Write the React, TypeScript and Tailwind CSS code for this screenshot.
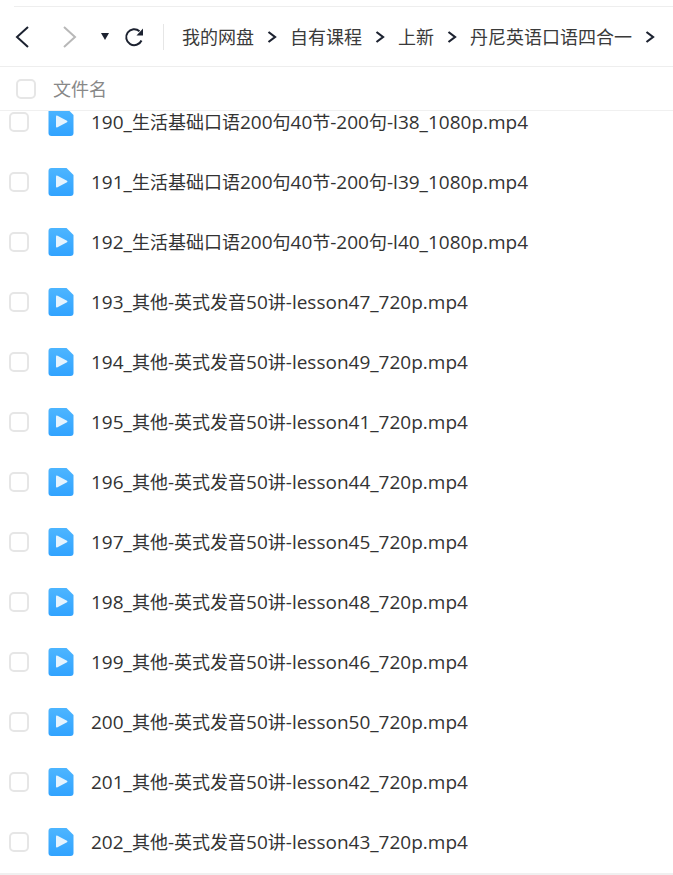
const files = [
  "190_生活基础口语200句40节-200句-l38_1080p.mp4",
  "191_生活基础口语200句40节-200句-l39_1080p.mp4",
  "192_生活基础口语200句40节-200句-l40_1080p.mp4",
  "193_其他-英式发音50讲-lesson47_720p.mp4",
  "194_其他-英式发音50讲-lesson49_720p.mp4",
  "195_其他-英式发音50讲-lesson41_720p.mp4",
  "196_其他-英式发音50讲-lesson44_720p.mp4",
  "197_其他-英式发音50讲-lesson45_720p.mp4",
  "198_其他-英式发音50讲-lesson48_720p.mp4",
  "199_其他-英式发音50讲-lesson46_720p.mp4",
  "200_其他-英式发音50讲-lesson50_720p.mp4",
  "201_其他-英式发音50讲-lesson42_720p.mp4",
  "202_其他-英式发音50讲-lesson43_720p.mp4",
]

const crumbs = ["我的网盘", "自有课程", "上新", "丹尼英语口语四合一"]

function Check() {
  return <div className="w-[20px] h-[20px] shrink-0 rounded-[5px] border-2 border-[#e6e6e6] bg-white" />
}

function VideoIcon() {
  return (
    <svg width="26" height="28" viewBox="0 0 26 28" className="shrink-0">
      <defs>
        <linearGradient id="vid" x1="0" y1="0" x2="0" y2="1">
          <stop offset="0" stopColor="#4db5ff" />
          <stop offset="1" stopColor="#31a3ff" />
        </linearGradient>
      </defs>
      <path d="M3 0H18L25 7V25Q25 28 22 28H3Q0 28 0 25V3Q0 0 3 0Z" fill="url(#vid)" transform="translate(0.5 0)" />
      <path d="M8 8.5Q8 7 9.5 7.7L19 12.7Q20 13.5 19 14.3L9.5 19.3Q8 20 8 18.5Z" fill="#e6f4ff" />
    </svg>
  )
}

function Arrow({ dir, color }: { dir: "left" | "right"; color: string }) {
  return (
    <svg width="14" height="24" viewBox="0 0 14 24" fill="none" stroke={color} strokeWidth="2">
      <path d={dir === "left" ? "M13 2L2 12L13 22" : "M1 2L12 12L1 22"} />
    </svg>
  )
}

function Sep() {
  return (
    <svg width="10" height="12" viewBox="0 0 10 12" fill="none" stroke="#1c2230" strokeWidth="2.2" className="mx-[13px]">
      <path d="M1.5 1L8 6L1.5 11" />
    </svg>
  )
}

// latin runs are set a bit larger than the CJK ones, the original font has wide digits
function FileName({ name }: { name: string }) {
  return (
    <span className="ml-[17px] whitespace-nowrap">
      {name.split(/([\u4e00-\u9fa5]+)/).map((part, i) =>
        i % 2 === 1 ? (
          <span key={i} className="text-[18px]">{part}</span>
        ) : (
          <span key={i} className="text-[19px] font-['Open_Sans','Noto_Sans_CJK_SC',sans-serif]">{part}</span>
        )
      )}
    </span>
  )
}

export default function App() {
  return (
    <div className="w-[673px] h-[875px] bg-white overflow-hidden flex flex-col font-['Noto_Sans_CJK_SC',sans-serif] text-[#333]">
      <div className="h-[6px] shrink-0" />
      <div className="ml-[14px] h-px shrink-0 bg-[#eeeeee]" />
      <div className="h-[60px] shrink-0 border-b border-[#eeeeee] flex items-center pl-[15px]">
        <Arrow dir="left" color="#1c2230" />
        <div className="ml-[34px]">
          <Arrow dir="right" color="#b8b8b8" />
        </div>
        <div className="ml-[24px] w-0 h-0 border-x-[4.5px] border-x-transparent border-t-[7px] border-t-[#1c2230]" />
        <svg width="20" height="20" viewBox="0 0 20 20" fill="none" className="ml-[15px]">
          <path d="M17.5 13.5A8 8 0 1 1 15.5 4.2" stroke="#1c2230" strokeWidth="2" />
          <path d="M19 1.5V8.5H12.5Z" fill="#1c2230" />
        </svg>
        <div className="ml-[19px] w-px h-[26px] bg-[#e6e6e6]" />
        <div className="ml-[18px] flex items-center text-[18px] text-[#3a3a3a]">
          {crumbs.map((c) => (
            <div key={c} className="flex items-center">
              <span>{c}</span>
              <Sep />
            </div>
          ))}
        </div>
      </div>
      <div className="h-[44px] shrink-0 border-b border-[#f0f0f0] flex items-center pl-[16px] text-[18px] text-[#888]">
        <Check />
        <span className="ml-[17px]">文件名</span>
      </div>
      <div className="flex-1 overflow-hidden border-b-[2px] border-[#f0f0f0]">
        <div className="-mt-[19px]">
          {files.map((f) => (
            <div key={f} className="h-[60px] flex items-center pl-[9px] text-[#333]">
              <Check />
              <div className="ml-[19px]">
                <VideoIcon />
              </div>
              <FileName name={f} />
            </div>
          ))}
        </div>
      </div>
    </div>
  )
}
